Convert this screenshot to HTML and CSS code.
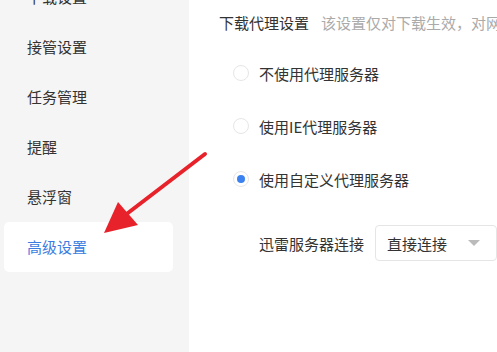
FILE: index.html
```html
<!DOCTYPE html>
<html lang="zh-CN">
<head>
  <meta charset="UTF-8" />
  <title>高级设置</title>
  <link rel="stylesheet" href="styles.css">
</head>
<body>
  <div class="window">
    <nav class="sidebar">
      <ul class="menu">
        <li class="menu-item">下载设置</li>
        <li class="menu-item">接管设置</li>
        <li class="menu-item">任务管理</li>
        <li class="menu-item">提醒</li>
        <li class="menu-item">悬浮窗</li>
        <li class="menu-item active">高级设置</li>
      </ul>
    </nav>

    <main class="content">
      <div class="section-title">
        <span class="title">下载代理设置</span>
        <span class="hint">该设置仅对下载生效，对网页浏览不生效</span>
      </div>

      <div class="options">
        <label class="option"><span class="radio"></span>不使用代理服务器</label>
        <label class="option"><span class="radio"></span>使用IE代理服务器</label>
        <label class="option"><span class="radio checked"></span>使用自定义代理服务器</label>
      </div>

      <div class="field">
        <span class="field-label">迅雷服务器连接</span>
        <div class="select">
          <span>直接连接</span>
          <span class="caret"></span>
        </div>
      </div>
    </main>

    <svg class="pointer" width="497" height="352" viewBox="0 0 497 352">
      <line x1="205" y1="154" x2="124" y2="216" stroke="#e8222a" stroke-width="4" stroke-linecap="round" />
      <polygon points="104,233 118,202 138,225" fill="#e8222a" />
    </svg>
  </div>
</body>
</html>
```

FILE: styles.css
```css
* {
  margin: 0;
  padding: 0;
  box-sizing: border-box;
  font-family: 'Noto Sans CJK SC', 'Noto Sans', sans-serif;
}
body {
  background-color: #ffffff;
  color: #333;
  font-size: 15px;
}
.window {
  position: relative;
  display: flex;
  width: 497px;
  height: 352px;
  overflow: hidden;
}
.sidebar {
  width: 189px;
  flex-shrink: 0;
  background-color: #f5f5f5;
  padding: 0 16px 0 4px;
  overflow: hidden;
}
.menu {
  list-style: none;
  margin-top: -28px;
}
.menu-item {
  height: 50px;
  display: flex;
  align-items: center;
  padding-left: 23px;
  padding-bottom: 2px;
  color: #333;
  border-radius: 5px;
}
.menu-item.active {
  background-color: #ffffff;
  color: #3b7de0;
}
.content {
  flex: 1;
  padding: 10px 0 0 30px;
  white-space: nowrap;
  overflow: hidden;
}
.section-title {
  height: 24px;
  display: flex;
  align-items: center;
  gap: 12px;
}
.title {
  color: #333;
}
.hint {
  color: #aaa;
}
.options {
  display: flex;
  flex-direction: column;
  gap: 29px;
  padding: 27px 0 0 14px;
}
.option {
  height: 24px;
  display: flex;
  align-items: center;
  gap: 10px;
  color: #333;
}
.radio {
  width: 16px;
  height: 16px;
  border-radius: 50%;
  border: 1px solid #e6e6e6;
  background-color: #fff;
  position: relative;
}
.radio.checked::after {
  content: '';
  position: absolute;
  left: 3px;
  top: 3px;
  width: 8px;
  height: 8px;
  border-radius: 50%;
  background-color: #3b82f0;
}
.field {
  display: flex;
  align-items: center;
  gap: 11px;
  margin-top: 34px;
  padding-left: 40px;
}
.field-label {
  color: #333;
}
.select {
  width: 124px;
  height: 36px;
  border: 1px solid #e5e5e5;
  border-radius: 4px;
  display: flex;
  align-items: center;
  justify-content: space-between;
  padding: 0 16px 0 11px;
  color: #333;
}
.caret {
  width: 0;
  height: 0;
  border-left: 6px solid transparent;
  border-right: 6px solid transparent;
  border-top: 6px solid #bbb;
}
.pointer {
  position: absolute;
  left: 0;
  top: 0;
  pointer-events: none;
}
```
